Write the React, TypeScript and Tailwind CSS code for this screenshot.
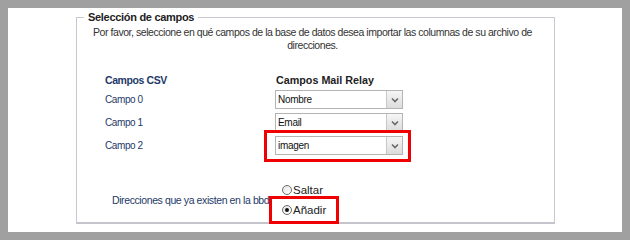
import React from "react";

const font = { fontFamily: '"Liberation Sans", Arial, sans-serif' };

function Select({ value }: { value: string }) {
  return (
    <div className="flex h-[19px] w-[128px] border border-[#b4b4b4] bg-white">
      <div className="flex flex-1 items-center pl-[2px] text-[10px] leading-[13px] tracking-[-0.3px] text-[#111]">{value}</div>
      <div className="flex w-[16px] items-center justify-center border-l border-[#c8c8c8] bg-gradient-to-b from-[#f6f6f6] to-[#dcdcdc]">
        <svg width="8" height="6" viewBox="0 0 8 6">
          <polyline points="1,1.5 4,4.5 7,1.5" fill="none" stroke="#6a6a6a" strokeWidth="1.6" />
        </svg>
      </div>
    </div>
  );
}

function Radio({ checked, label }: { checked?: boolean; label: string }) {
  return (
    <div className="flex h-[20px] items-center gap-[1px]">
      <span className="flex h-[10px] w-[10px] items-center justify-center rounded-full border border-[#6c6c6c] bg-gradient-to-br from-[#e4e4e4] to-white">
        {checked && <span className="h-[4px] w-[4px] rounded-full bg-[#111]" />}
      </span>
      <span className="text-[11.5px] leading-[13px] text-[#222]">{label}</span>
    </div>
  );
}

export default function App() {
  const rows = [
    { label: "Campo 0", value: "Nombre" },
    { label: "Campo 1", value: "Email" },
    { label: "Campo 2", value: "imagen" },
  ];
  return (
    <div className="h-[240px] w-[630px] bg-[#a0a0a0] p-2" style={font}>
      <div className="relative h-[224px] bg-white pt-[3px]">
        <fieldset className="ml-[68px] h-[213px] w-[479px] border border-b-2 border-[#c8c8d0] border-b-[#c4c4cc]">
          <legend className="ml-[7px] px-[4px] text-[11px] font-bold leading-[13px] tracking-[-0.3px] text-[#222]">
            Selección de campos
          </legend>
          <p className="mt-[2px] whitespace-nowrap pr-[6px] text-center text-[10.5px] leading-[13px] tracking-[-0.45px] text-[#333]">
            Por favor, seleccione en qué campos de la base de datos desea importar las columnas de su archivo de
            <br />
            direcciones.
          </p>
          <div className="mt-[22px] pl-[28px]">
            <div className="flex h-[13px] items-center font-bold leading-[13px]">
              <div className="w-[170px] text-[10.5px] tracking-[-0.4px] text-[#1e3a68]">Campos CSV</div>
              <div className="pl-[1px] text-[10.75px] text-[#222]">Campos Mail Relay</div>
            </div>
            <div className="mt-[3px] flex flex-col gap-[4px]">
              {rows.map((r) => (
                <div key={r.label} className="flex items-center">
                  <div className="w-[170px] text-[10px] leading-[13px] tracking-[-0.4px] text-[#1e3a68]">{r.label}</div>
                  <Select value={r.value} />
                </div>
              ))}
            </div>
          </div>
          <div className="mt-[25px] flex items-center pl-[35px]">
            <div className="w-[157px] overflow-hidden whitespace-nowrap text-[10.5px] leading-[13px] tracking-[-0.4px] text-[#1e3a68]">
              Direcciones que ya existen en la bbdd
            </div>
            <div className="ml-[13px] flex flex-col">
              <Radio label="Saltar" />
              <Radio checked label="Añadir" />
            </div>
          </div>
        </fieldset>
        <div className="absolute left-[256px] top-[122px] h-[32px] w-[147px] border-[3px] border-[#f00000]" />
        <div className="absolute left-[261px] top-[188px] h-[28px] w-[70px] border-[3px] border-[#f00000]" />
      </div>
    </div>
  );
}
